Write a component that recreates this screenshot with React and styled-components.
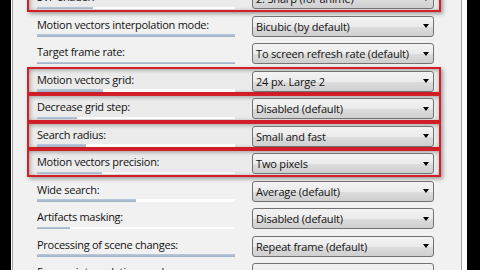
import React from "react";
import styled, { createGlobalStyle } from "styled-components";

const GlobalStyle = createGlobalStyle`
  html, body {
    margin: 0;
    padding: 0;
    background: #000;
    overflow: hidden;
  }
`;

const settings = [
  { label: "SVP shader:", value: "2. Sharp (for anime)", fill: 56, marked: true },
  { label: "Motion vectors interpolation mode:", value: "Bicubic (by default)", fill: 198 },
  { label: "Target frame rate:", value: "To screen refresh rate (default)", fill: 198 },
  { label: "Motion vectors grid:", value: "24 px. Large 2", fill: 66, marked: true },
  { label: "Decrease grid step:", value: "Disabled (default)", fill: 40, marked: true },
  { label: "Search radius:", value: "Small and fast", fill: 49, marked: true },
  { label: "Motion vectors precision:", value: "Two pixels", fill: 65, marked: true },
  { label: "Wide search:", value: "Average (default)", fill: 99 },
  { label: "Artifacts masking:", value: "Disabled (default)", fill: 33 },
  { label: "Processing of scene changes:", value: "Repeat frame (default)", fill: 198 },
  { label: "Frames interpolation mode:", value: "Uniform (default)", fill: 120 },
];

const Screen = styled.div`
  display: flex;
  height: 270px;
  background: #000;
  overflow: hidden;
  font-family: "Open Sans", "Noto Sans", "Liberation Sans", sans-serif;
  font-size: 11px;
  color: #111;
`;

const Panel = styled.div`
  margin-left: 11px;
  width: 456px;
  padding: 0 5px 0 1px;
  box-sizing: border-box;
  background: #fbfbfb;
  display: flex;
`;

const Content = styled.div`
  flex: 1;
  border-left: 1px solid #a3a3a3;
  border-right: 1px solid #a3a3a3;
  background: #f1f1f1;
  overflow: hidden;
`;

const List = styled.div`
  margin-top: -15.8px;
  padding-left: 14px;
  display: flex;
  flex-direction: column;
`;

const Row = styled.div`
  position: relative;
  width: 414px;
  height: 27.5px;
  box-sizing: border-box;
  display: flex;
  align-items: flex-start;
  padding: 2px 0 0 8px;
  border: 2px solid ${(p) => (p.$marked ? "#d31f28" : "transparent")};
  background: ${(p) => (p.$marked ? "#ebebeb" : "transparent")};
  box-shadow: ${(p) =>
    p.$marked
      ? "2px 2px 4px rgba(0,0,0,0.35), inset 1px 1px 4px rgba(0,0,0,0.35)"
      : "none"};
`;

const LabelCol = styled.div`
  width: 198px;
  padding-top: 1.8px;
  display: flex;
  flex-direction: column;
`;

const Label = styled.span`
  line-height: 14px;
  letter-spacing: -0.28px;
  white-space: nowrap;
`;

const Track = styled.div`
  margin-top: 2.8px;
  height: 2.5px;
  background: #fdfdfd;
`;

const Fill = styled.div`
  height: 100%;
  background: linear-gradient(#bccbdc, #9cb0c7);
`;

const Combo = styled.div`
  margin-left: 17px;
  width: 182px;
  height: 21px;
  box-sizing: border-box;
  border: 1px solid #727272;
  border-radius: 3px;
  background: linear-gradient(#f3f3f3 0%, #ebebeb 50%, #dddddd 51%, #cfcfcf 100%);
  display: flex;
  align-items: center;
  justify-content: space-between;
  padding: 0 3px 0 3px;
  line-height: 19px;
`;

const ComboText = styled.span`
  letter-spacing: -0.18px;
  white-space: nowrap;
`;

const Arrow = styled.span`
  width: 0;
  height: 0;
  border-left: 3.5px solid transparent;
  border-right: 3.5px solid transparent;
  border-top: 4px solid #000;
  margin-right: 1px;
`;

export default function App() {
  return (
    <>
      <GlobalStyle />
      <Screen>
        <Panel>
          <Content>
            <List>
              {settings.map((s) => (
                <Row key={s.label} $marked={s.marked}>
                  <LabelCol>
                    <Label>{s.label}</Label>
                    <Track>
                      <Fill style={{ width: s.fill }} />
                    </Track>
                  </LabelCol>
                  <Combo>
                    <ComboText>{s.value}</ComboText>
                    <Arrow />
                  </Combo>
                </Row>
              ))}
            </List>
          </Content>
        </Panel>
      </Screen>
    </>
  );
}
